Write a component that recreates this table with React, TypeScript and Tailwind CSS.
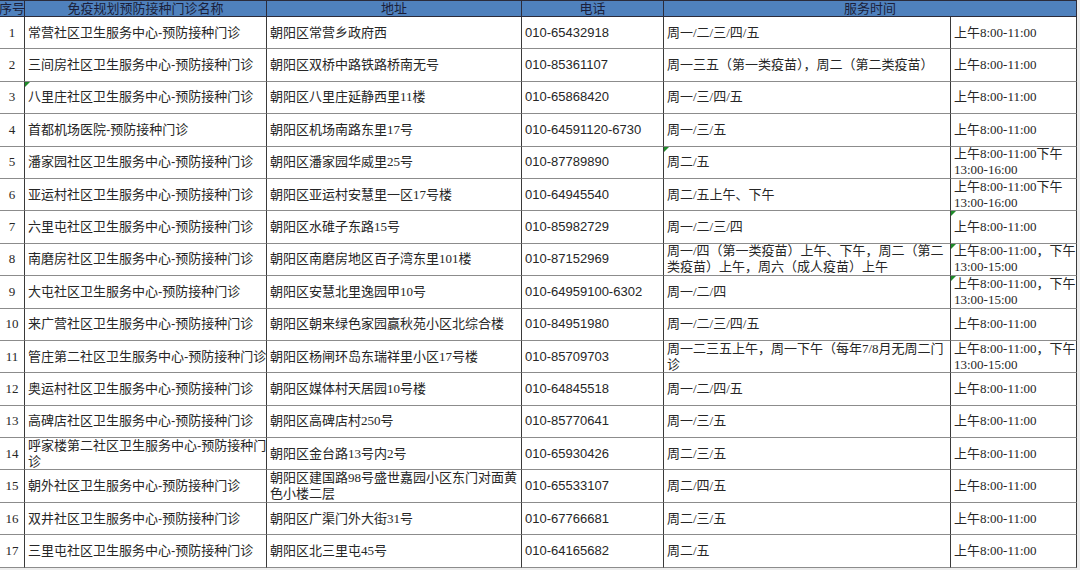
import React from "react";

type Row = {
  no: number;
  name: string[];
  addr: string[];
  tel: string;
  days: string[];
  time: string[];
  tri?: "name" | "days" | "time";
};

const AM = "上午8:00-11:00";

const rows: Row[] = [
  { no: 1, name: ["常营社区卫生服务中心-预防接种门诊"], addr: ["朝阳区常营乡政府西"], tel: "010-65432918", days: ["周一/二/三/四/五"], time: [AM] },
  { no: 2, name: ["三间房社区卫生服务中心-预防接种门诊"], addr: ["朝阳区双桥中路铁路桥南无号"], tel: "010-85361107", days: ["周一三五（第一类疫苗），周二（第二类疫苗）"], time: [AM] },
  { no: 3, name: ["八里庄社区卫生服务中心-预防接种门诊"], addr: ["朝阳区八里庄延静西里11楼"], tel: "010-65868420", days: ["周一/三/四/五"], time: [AM], tri: "name" },
  { no: 4, name: ["首都机场医院-预防接种门诊"], addr: ["朝阳区机场南路东里17号"], tel: "010-64591120-6730", days: ["周一/三/五"], time: [AM] },
  { no: 5, name: ["潘家园社区卫生服务中心-预防接种门诊"], addr: ["朝阳区潘家园华威里25号"], tel: "010-87789890", days: ["周二/五"], time: ["上午8:00-11:00下午", "13:00-16:00"], tri: "days" },
  { no: 6, name: ["亚运村社区卫生服务中心-预防接种门诊"], addr: ["朝阳区亚运村安慧里一区17号楼"], tel: "010-64945540", days: ["周二/五上午、下午"], time: ["上午8:00-11:00下午", "13:00-16:00"] },
  { no: 7, name: ["六里屯社区卫生服务中心-预防接种门诊"], addr: ["朝阳区水碓子东路15号"], tel: "010-85982729", days: ["周一/二/三/四"], time: [AM], tri: "time" },
  { no: 8, name: ["南磨房社区卫生服务中心-预防接种门诊"], addr: ["朝阳区南磨房地区百子湾东里101楼"], tel: "010-87152969", days: ["周一/四（第一类疫苗）上午、下午，周二（第二", "类疫苗）上午，周六（成人疫苗）上午"], time: ["上午8:00-11:00，下午", "13:00-15:00"], tri: "time" },
  { no: 9, name: ["大屯社区卫生服务中心-预防接种门诊"], addr: ["朝阳区安慧北里逸园甲10号"], tel: "010-64959100-6302", days: ["周一/二/四"], time: ["上午8:00-11:00，下午", "13:00-15:00"], tri: "time" },
  { no: 10, name: ["来广营社区卫生服务中心-预防接种门诊"], addr: ["朝阳区朝来绿色家园赢秋苑小区北综合楼"], tel: "010-84951980", days: ["周一/二/三/四/五"], time: [AM] },
  { no: 11, name: ["管庄第二社区卫生服务中心-预防接种门诊"], addr: ["朝阳区杨闸环岛东瑞祥里小区17号楼"], tel: "010-85709703", days: ["周一二三五上午，周一下午（每年7/8月无周二门", "诊"], time: ["上午8:00-11:00，下午", "13:00-15:00"] },
  { no: 12, name: ["奥运村社区卫生服务中心-预防接种门诊"], addr: ["朝阳区媒体村天居园10号楼"], tel: "010-64845518", days: ["周一/二/四/五"], time: [AM] },
  { no: 13, name: ["高碑店社区卫生服务中心-预防接种门诊"], addr: ["朝阳区高碑店村250号"], tel: "010-85770641", days: ["周一/三/五"], time: [AM] },
  { no: 14, name: ["呼家楼第二社区卫生服务中心-预防接种门", "诊"], addr: ["朝阳区金台路13号内2号"], tel: "010-65930426", days: ["周二/三/五"], time: [AM] },
  { no: 15, name: ["朝外社区卫生服务中心-预防接种门诊"], addr: ["朝阳区建国路98号盛世嘉园小区东门对面黄", "色小楼二层"], tel: "010-65533107", days: ["周二/四/五"], time: [AM] },
  { no: 16, name: ["双井社区卫生服务中心-预防接种门诊"], addr: ["朝阳区广渠门外大街31号"], tel: "010-67766681", days: ["周二/三/五"], time: [AM] },
  { no: 17, name: ["三里屯社区卫生服务中心-预防接种门诊"], addr: ["朝阳区北三里屯45号"], tel: "010-64165682", days: ["周二/五"], time: [AM] },
];

const cjk = "font-['Liberation_Sans','Noto_Sans_CJK_SC',sans-serif]";
const serif = "font-['Liberation_Serif','Noto_Sans_CJK_SC',serif]";

function Tri() {
  return (
    <span className="absolute left-0 top-0 h-0 w-0 border-t-[5px] border-r-[5px] border-t-[#1f8a2a] border-r-transparent" />
  );
}

function Cell({ lines, className = "", tri = false }: { lines: string[]; className?: string; tri?: boolean }) {
  return (
    <div className={`relative flex h-[32.4px] flex-col justify-center overflow-hidden border-r border-b border-r-[#3a3a3a] border-b-[#8c8c8c] px-[3px] text-[13px] leading-[16px] whitespace-nowrap ${className}`}>
      {tri && <Tri />}
      {lines.map((l, i) => (
        <span key={i}>{l}</span>
      ))}
    </div>
  );
}

export default function App() {
  return (
    <div className="h-[570px] w-[1080px] overflow-hidden bg-[#ededed] text-[#262626]">
      <div className={`grid w-[1077px] grid-cols-[25px_242px_255px_142px_287px_126px] bg-white ${cjk}`}>
        {/* header */}
        <div className="flex h-[17px] items-center justify-center overflow-visible whitespace-nowrap border-t border-r border-b border-[#2b2b3a] bg-[#4f81bd] text-[13px] leading-none text-[#1b1f3a]">序号</div>
        <div className="flex h-[17px] items-center justify-center border-t border-r border-b border-[#2b2b3a] bg-[#4f81bd] text-[13px] leading-none text-[#1b1f3a]">免疫规划预防接种门诊名称</div>
        <div className="flex h-[17px] items-center justify-center border-t border-r border-b border-[#2b2b3a] bg-[#4f81bd] text-[13px] leading-none text-[#1b1f3a]">地址</div>
        <div className="flex h-[17px] items-center justify-center border-t border-r border-b border-[#2b2b3a] bg-[#4f81bd] text-[13px] leading-none text-[#1b1f3a]">电话</div>
        <div className="col-span-2 flex h-[17px] items-center justify-center border-t border-r border-b border-[#2b2b3a] bg-[#4f81bd] text-[13px] leading-none text-[#1b1f3a]">服务时间</div>

        {rows.map((r) => (
          <React.Fragment key={r.no}>
            <Cell lines={[String(r.no)]} className={`items-center px-0 ${serif}`} />
            <Cell lines={r.name} tri={r.tri === "name"} />
            <Cell lines={r.addr} className={serif} />
            <Cell lines={[r.tel]} className="text-[12px]" />
            <Cell lines={r.days} className={serif} tri={r.tri === "days"} />
            <Cell lines={r.time} className={`px-[2px] ${serif}`} tri={r.tri === "time"} />
          </React.Fragment>
        ))}
      </div>
    </div>
  );
}
